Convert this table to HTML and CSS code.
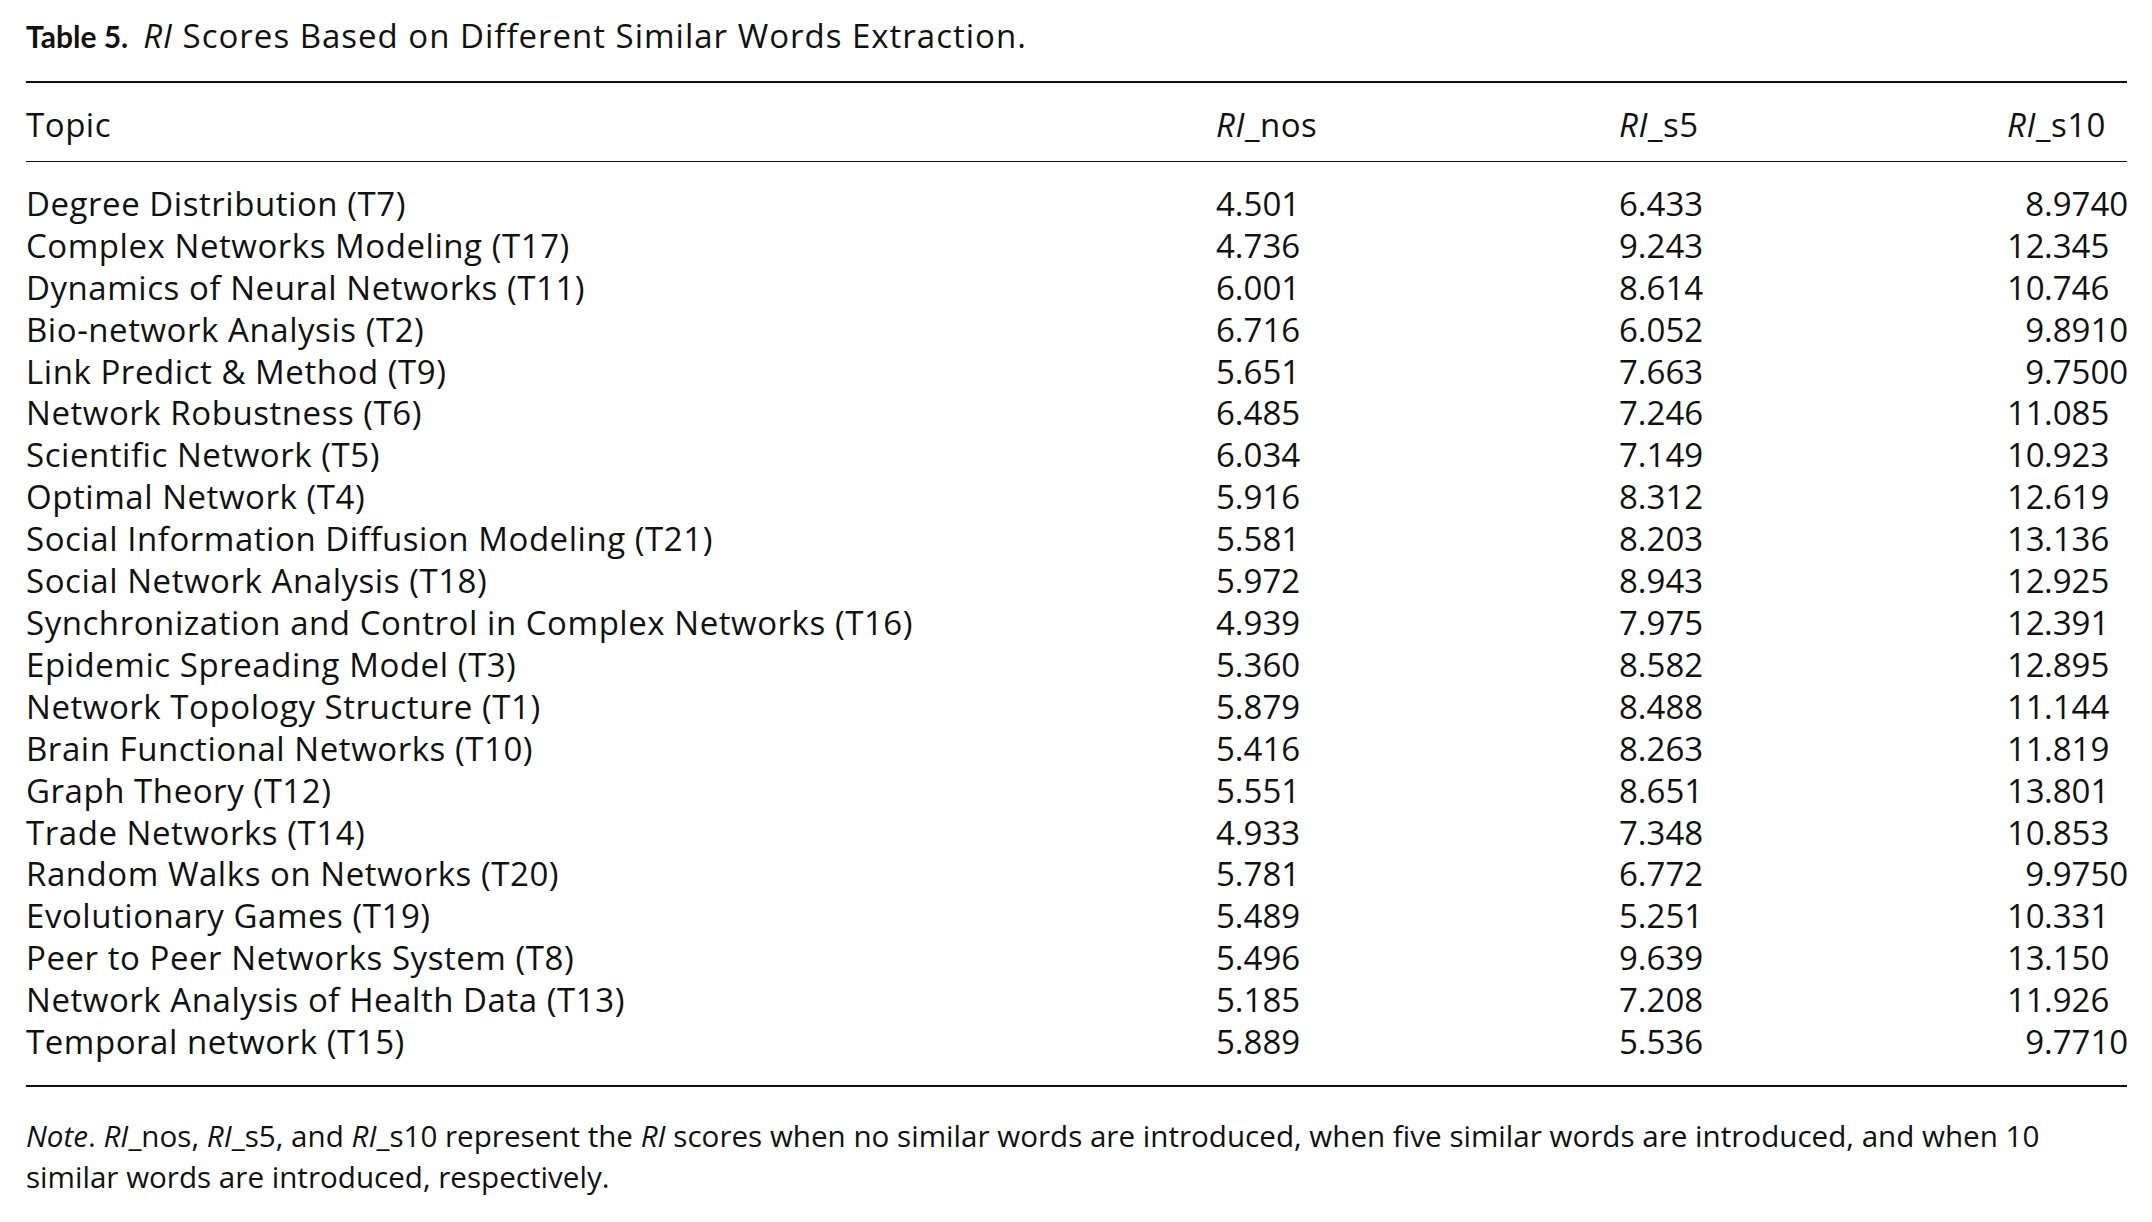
FILE: index.html
```html
<!DOCTYPE html>
<html lang="en">
<head>
<meta charset="utf-8">
<title>Table 5. RI Scores Based on Different Similar Words Extraction</title>
<link rel="stylesheet" href="styles.css">
</head>
<body>
<div class="page">
  <p class="caption"><b>Table 5.</b><span class="sp"></span><i>RI</i> Scores Based on Different Similar Words Extraction.</p>
  <table class="tbl">
    <colgroup>
      <col class="c-topic"><col class="c-nos"><col class="c-s5"><col class="c-s10">
    </colgroup>
    <thead>
      <tr><th>Topic</th><th><i>RI</i>_nos</th><th><i>RI</i>_s5</th><th><i>RI</i>_s10</th></tr>
    </thead>
    <tbody>
      <tr><td>Degree Distribution (T7)</td><td>4.501</td><td>6.433</td><td><span class="int">8</span>.9740</td></tr>
      <tr><td>Complex Networks Modeling (T17)</td><td>4.736</td><td>9.243</td><td><span class="int">12</span>.345</td></tr>
      <tr><td>Dynamics of Neural Networks (T11)</td><td>6.001</td><td>8.614</td><td><span class="int">10</span>.746</td></tr>
      <tr><td>Bio-network Analysis (T2)</td><td>6.716</td><td>6.052</td><td><span class="int">9</span>.8910</td></tr>
      <tr><td>Link Predict &amp; Method (T9)</td><td>5.651</td><td>7.663</td><td><span class="int">9</span>.7500</td></tr>
      <tr><td>Network Robustness (T6)</td><td>6.485</td><td>7.246</td><td><span class="int">11</span>.085</td></tr>
      <tr><td>Scientific Network (T5)</td><td>6.034</td><td>7.149</td><td><span class="int">10</span>.923</td></tr>
      <tr><td>Optimal Network (T4)</td><td>5.916</td><td>8.312</td><td><span class="int">12</span>.619</td></tr>
      <tr><td>Social Information Diffusion Modeling (T21)</td><td>5.581</td><td>8.203</td><td><span class="int">13</span>.136</td></tr>
      <tr><td>Social Network Analysis (T18)</td><td>5.972</td><td>8.943</td><td><span class="int">12</span>.925</td></tr>
      <tr><td>Synchronization and Control in Complex Networks (T16)</td><td>4.939</td><td>7.975</td><td><span class="int">12</span>.391</td></tr>
      <tr><td>Epidemic Spreading Model (T3)</td><td>5.360</td><td>8.582</td><td><span class="int">12</span>.895</td></tr>
      <tr><td>Network Topology Structure (T1)</td><td>5.879</td><td>8.488</td><td><span class="int">11</span>.144</td></tr>
      <tr><td>Brain Functional Networks (T10)</td><td>5.416</td><td>8.263</td><td><span class="int">11</span>.819</td></tr>
      <tr><td>Graph Theory (T12)</td><td>5.551</td><td>8.651</td><td><span class="int">13</span>.801</td></tr>
      <tr><td>Trade Networks (T14)</td><td>4.933</td><td>7.348</td><td><span class="int">10</span>.853</td></tr>
      <tr><td>Random Walks on Networks (T20)</td><td>5.781</td><td>6.772</td><td><span class="int">9</span>.9750</td></tr>
      <tr><td>Evolutionary Games (T19)</td><td>5.489</td><td>5.251</td><td><span class="int">10</span>.331</td></tr>
      <tr><td>Peer to Peer Networks System (T8)</td><td>5.496</td><td>9.639</td><td><span class="int">13</span>.150</td></tr>
      <tr><td>Network Analysis of Health Data (T13)</td><td>5.185</td><td>7.208</td><td><span class="int">11</span>.926</td></tr>
      <tr><td>Temporal network (T15)</td><td>5.889</td><td>5.536</td><td><span class="int">9</span>.7710</td></tr>
    </tbody>
  </table>
  <p class="note"><i>Note</i>. <i>RI</i>_nos, <i>RI</i>_s5, and <i>RI</i>_s10 represent the <i>RI</i> scores when no similar words are introduced, when five similar words are introduced, and when 10 similar words are introduced, respectively.</p>
</div>
</body>
</html>
```
FILE: styles.css
```css
html, body {
  margin: 0;
  padding: 0;
  background: #ffffff;
}

.page {
  padding: 0 25px 0 26px;
  font-family: "Open Sans", Lato, sans-serif;
  color: #111111;
}

.caption {
  margin: 0;
  padding-top: 16px;
  font-size: 33px;
  letter-spacing: 1px;
  line-height: 40px;
  height: 40px;
  white-space: nowrap;
}

.caption b {
  font-family: Lato, "Open Sans", sans-serif;
  font-size: 30px;
  font-weight: 700;
  letter-spacing: 0;
}

.caption .sp {
  display: inline-block;
  width: 15px;
}

.tbl {
  margin-top: 25px;
  width: 100%;
  table-layout: fixed;
  border-collapse: collapse;
  border-top: 2px solid #111111;
  border-bottom: 2px solid #111111;
  font-size: 33px;
  letter-spacing: 0.55px;
  line-height: 41.9px;
}

.c-topic { width: 1190px; }
.c-nos { width: 403px; }
.c-s5 { width: 388px; }
.c-s10 { width: auto; }

.tbl th {
  font-weight: 400;
  text-align: left;
  padding: 21px 0 15px 0;
  border-bottom: 1.5px solid #111111;
  white-space: nowrap;
  overflow: visible;
}

.tbl td {
  padding: 0;
  text-align: left;
  white-space: nowrap;
  overflow: visible;
  height: 41.9px;
}

.tbl td + td {
  letter-spacing: 0;
}

.tbl tbody tr:first-child td {
  padding-top: 21px;
}

.tbl tbody tr:last-child td {
  padding-bottom: 22px;
}

.int {
  display: inline-block;
  width: 37px;
  text-align: right;
  margin-left: 0;
}

.note {
  margin: 28px 0 0 0;
  font-size: 29.6px;
  line-height: 41px;
  padding-right: 70px;
}
```
